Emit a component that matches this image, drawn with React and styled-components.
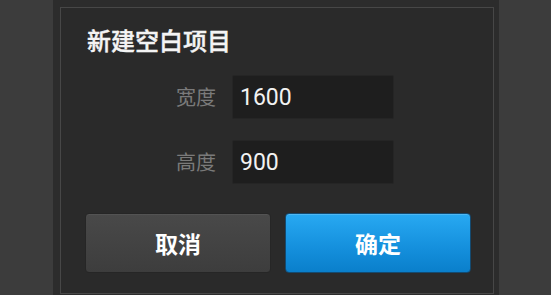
import React from "react";
import styled, { createGlobalStyle } from "styled-components";

const Global = createGlobalStyle`
  html, body { margin: 0; padding: 0; background: #3c3c3c; }
  body { font-family: "Noto Sans CJK SC", "Noto Sans", sans-serif; width: 551px; height: 295px; overflow: hidden; }
`;

const Frame = styled.div`
  margin-left: 53px;
  width: 446px;
  height: 295px;
  box-sizing: border-box;
  padding: 7px 5px 0 7px;
  background: #2c2c2c;
`;

const Panel = styled.div`
  box-sizing: border-box;
  height: 287px;
  border: 1px solid #474747;
  background: #2a2a2a;
  padding: 19px 24px 0 24px;
  display: flex;
  flex-direction: column;
`;

const Title = styled.h1`
  margin: 0 0 0 2px;
  font-size: 24px;
  line-height: 26px;
  font-weight: 500;
  -webkit-text-stroke: 0.4px #f4f4f4;
  color: #f4f4f4;
`;

const Form = styled.div`
  margin-top: 22px;
  display: grid;
  grid-template-columns: 131px 162px;
  column-gap: 16px;
  row-gap: 21px;
  align-items: center;
`;

const Label = styled.label`
  text-align: right;
  font-size: 20px;
  line-height: 24px;
  color: #7a7a7a;
`;

const Input = styled.div`
  box-sizing: border-box;
  height: 44px;
  background: #1e1e1e;
  border: 1px solid #252525;
  border-radius: 2px;
  padding-left: 7px;
  display: flex;
  align-items: center;
  font-family: "Roboto", "Noto Sans", sans-serif;
  font-size: 23px;
  color: #f2f2f2;
`;

const Buttons = styled.div`
  margin-top: 29px;
  display: flex;
  gap: 14px;
`;

const Button = styled.button`
  flex: 0 0 186px;
  height: 60px;
  box-sizing: border-box;
  border-radius: 4px;
  font-family: "Noto Sans CJK SC", sans-serif;
  font-size: 23px;
  font-weight: 700;
  color: #ffffff;
  cursor: pointer;
  border: 1px solid ${(p) => (p.$primary ? "#144a70" : "#262626")};
  background: ${(p) =>
    p.$primary
      ? "linear-gradient(to bottom, #28a9f2 0%, #148fdc 60%, #0a7fcb 100%)"
      : "linear-gradient(to bottom, #494949 0%, #3d3d3d 100%)"};
  box-shadow: inset 0 1px 0 ${(p) => (p.$primary ? "rgba(255,255,255,0.18)" : "rgba(255,255,255,0.06)")};
`;

export default function App() {
  return (
    <>
      <Global />
      <Frame>
        <Panel>
          <Title>新建空白项目</Title>
          <Form>
            <Label>宽度</Label>
            <Input>1600</Input>
            <Label>高度</Label>
            <Input>900</Input>
          </Form>
          <Buttons>
            <Button>取消</Button>
            <Button $primary>确定</Button>
          </Buttons>
        </Panel>
      </Frame>
    </>
  );
}
